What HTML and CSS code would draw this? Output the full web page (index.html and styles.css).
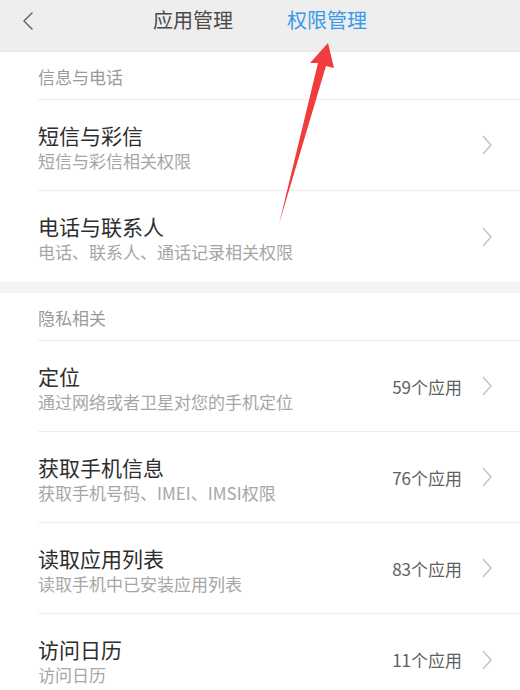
FILE: index.html
```html
<!DOCTYPE html>
<html lang="zh-CN">
<head>
<meta charset="utf-8">
<title>权限管理</title>
<link rel="stylesheet" href="styles.css">
</head>
<body>
<div class="screen">
  <header class="topbar">
    <svg class="back" width="12" height="18" viewBox="0 0 12 18"><path d="M10 1 L2 9 L10 17" fill="none" stroke="#6a6a6a" stroke-width="1.6" stroke-linecap="round" stroke-linejoin="round"/></svg>
    <nav class="tabs">
      <span class="tab">应用管理</span>
      <span class="tab active">权限管理</span>
    </nav>
  </header>

  <section class="group">
    <div class="group-title">信息与电话</div>
    <div class="row">
      <div class="text"><div class="title">短信与彩信</div><div class="sub">短信与彩信相关权限</div></div>
      <div class="right"><svg class="chev" width="12" height="22" viewBox="0 0 12 22"><path d="M2 2 L10 11 L2 20" fill="none" stroke="#c4c4c4" stroke-width="1.5"/></svg></div>
    </div>
    <div class="row">
      <div class="text"><div class="title">电话与联系人</div><div class="sub">电话、联系人、通话记录相关权限</div></div>
      <div class="right"><svg class="chev" width="12" height="22" viewBox="0 0 12 22"><path d="M2 2 L10 11 L2 20" fill="none" stroke="#c4c4c4" stroke-width="1.5"/></svg></div>
    </div>
  </section>

  <div class="gap"></div>

  <section class="group">
    <div class="group-title">隐私相关</div>
    <div class="row">
      <div class="text"><div class="title">定位</div><div class="sub">通过网络或者卫星对您的手机定位</div></div>
      <div class="right"><span class="count">59个应用</span><svg class="chev" width="12" height="22" viewBox="0 0 12 22"><path d="M2 2 L10 11 L2 20" fill="none" stroke="#c4c4c4" stroke-width="1.5"/></svg></div>
    </div>
    <div class="row">
      <div class="text"><div class="title">获取手机信息</div><div class="sub">获取手机号码、IMEI、IMSI权限</div></div>
      <div class="right"><span class="count">76个应用</span><svg class="chev" width="12" height="22" viewBox="0 0 12 22"><path d="M2 2 L10 11 L2 20" fill="none" stroke="#c4c4c4" stroke-width="1.5"/></svg></div>
    </div>
    <div class="row">
      <div class="text"><div class="title">读取应用列表</div><div class="sub">读取手机中已安装应用列表</div></div>
      <div class="right"><span class="count">83个应用</span><svg class="chev" width="12" height="22" viewBox="0 0 12 22"><path d="M2 2 L10 11 L2 20" fill="none" stroke="#c4c4c4" stroke-width="1.5"/></svg></div>
    </div>
    <div class="row">
      <div class="text"><div class="title">访问日历</div><div class="sub">访问日历</div></div>
      <div class="right"><span class="count">11个应用</span><svg class="chev" width="12" height="22" viewBox="0 0 12 22"><path d="M2 2 L10 11 L2 20" fill="none" stroke="#c4c4c4" stroke-width="1.5"/></svg></div>
    </div>
  </section>

  <svg class="arrow" width="520" height="690" viewBox="0 0 520 690">
    <path d="M328 43 L310 63 L318 63 L279 224 L326 66 L334 68 Z" fill="#f03c3c"/>
  </svg>
</div>
</body>
</html>
```
FILE: styles.css
```css
* { box-sizing: border-box; }
html, body {
  margin: 0;
  padding: 0;
  background: #ffffff;
}
body {
  font-family: "Noto Sans CJK SC", "Noto Sans", sans-serif;
  color: #333333;
}
.screen {
  position: relative;
  width: 520px;
  height: 690px;
  overflow: hidden;
  background: #ffffff;
}
.topbar {
  position: relative;
  height: 52px;
  background: #eeeeee;
  border-bottom: 1px solid #e6e6e6;
}
.back {
  position: absolute;
  left: 22px;
  top: 12px;
}
.tabs {
  display: flex;
  justify-content: center;
  gap: 54px;
  padding-top: 5px;
}
.tab {
  font-size: 20px;
  line-height: 30px;
  color: #4a4a4a;
}
.tab.active {
  color: #3a9ae8;
}
.group {
  padding-left: 38px;
}
.group-title {
  height: 48px;
  display: flex;
  align-items: center;
  font-size: 17px;
  color: #9a9a9a;
  padding-top: 2px;
  border-bottom: 1px solid #eeeeee;
}
.row {
  height: 91px;
  display: flex;
  align-items: center;
  justify-content: space-between;
  border-bottom: 1px solid #eeeeee;
}
.row:last-child {
  border-bottom: none;
}
.text {
  padding-top: 4px;
}
.title {
  font-size: 21px;
  line-height: 26px;
  color: #2e2e2e;
}
.sub {
  margin-top: 1px;
  font-size: 17px;
  line-height: 24px;
  color: #a6a6a6;
}
.right {
  display: flex;
  align-items: center;
  padding-right: 27px;
}
.count {
  font-size: 17px;
  color: #606060;
  margin-right: 19px;
}
.chev {
  display: block;
}
.gap {
  height: 11px;
  background: #f4f4f4;
}
.arrow {
  position: absolute;
  left: 0;
  top: 0;
  pointer-events: none;
}
```
